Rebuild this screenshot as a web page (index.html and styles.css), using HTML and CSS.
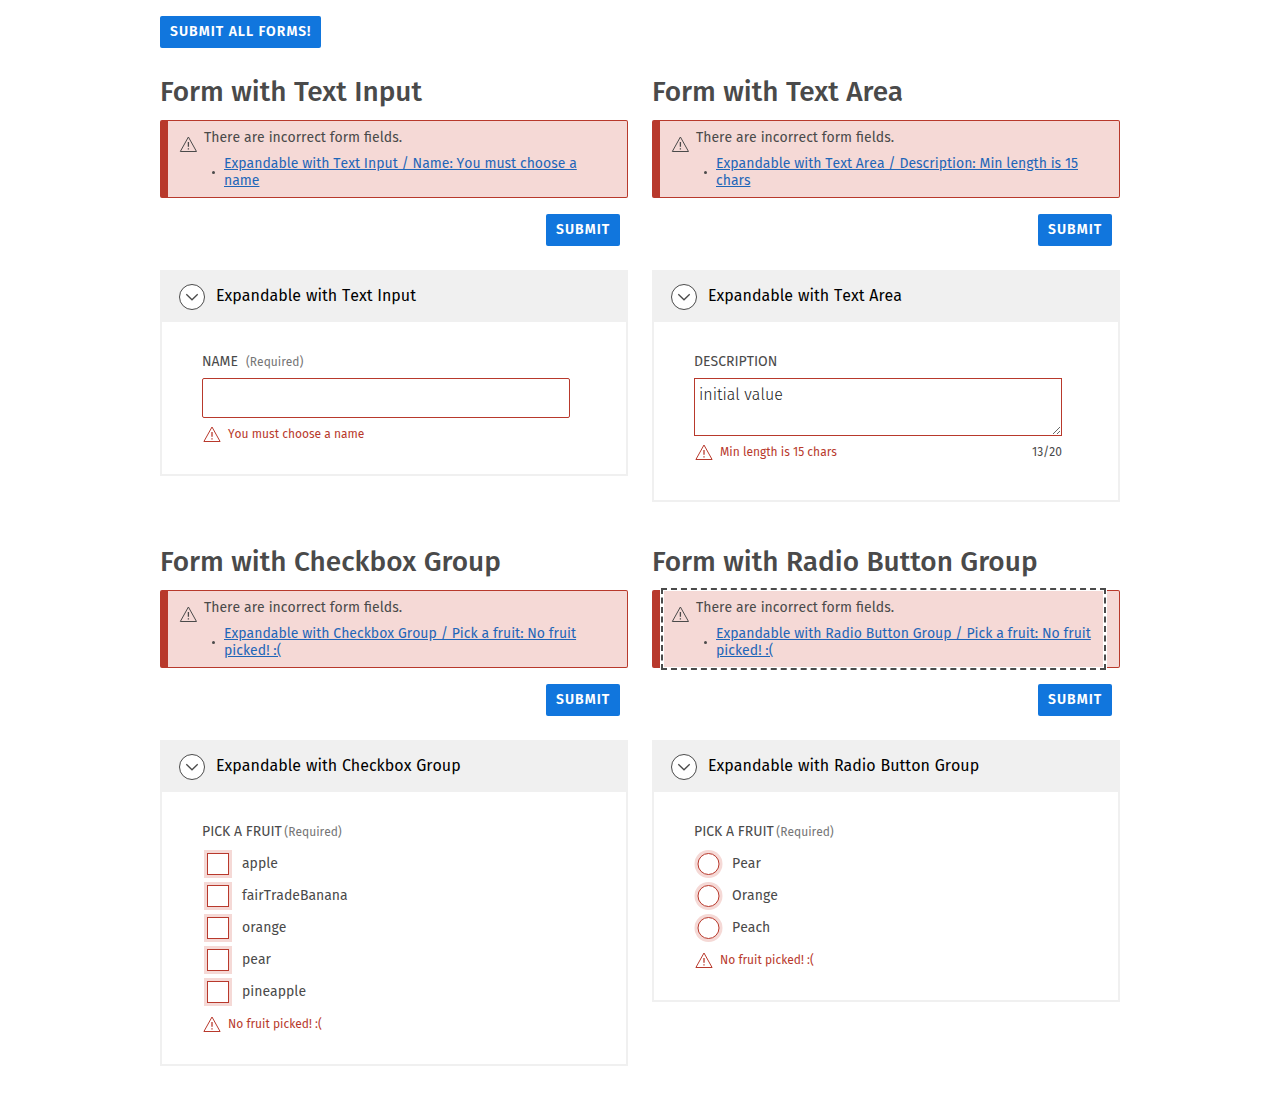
FILE: index.html
```html
<!DOCTYPE html>
<html lang="en">
<head>
<meta charset="utf-8">
<title>Forms</title>
<link rel="stylesheet" href="styles.css">
</head>
<body>
<svg class="defs" aria-hidden="true">
  <symbol id="warning" viewBox="0 0 20 20">
    <path d="M10.4 3 18.5 17.5H2.3Z" fill="none" stroke="currentColor" stroke-linejoin="round"/>
    <path d="M10.4 8V12.8M10.4 14.2V15.6" fill="none" stroke="currentColor" stroke-width="1.3"/>
  </symbol>
  <symbol id="chevron" viewBox="0 0 26 26">
    <circle cx="13" cy="13" r="12.5" fill="#fff" stroke="currentColor"/>
    <path d="M7.3 10.2 13 15.8 18.7 10.2" fill="none" stroke="currentColor" stroke-width="1.3"/>
  </symbol>
</svg>
<main class="page">
  <button class="btn btn-all">SUBMIT ALL FORMS!</button>
  <div class="grid">
    <section class="form">
      <h2>Form with Text Input</h2>
      <div class="alert"><div class="alert-body">
        <svg class="icon"><use href="#warning"/></svg>
        <div class="alert-text"><p>There are incorrect form fields.</p>
          <ul><li><a href="#name">Expandable with Text Input / Name: You must choose a name</a></li></ul></div>
      </div></div>
      <div class="actions"><button class="btn">SUBMIT</button></div>
      <div class="panel">
        <div class="panel-head"><svg class="toggle"><use href="#chevron"/></svg><span>Expandable with Text Input</span></div>
        <div class="panel-body">
          <label class="label" for="name"><span class="caps">NAME</span><small class="spaced">(Required)</small></label>
          <input class="input" id="name" type="text">
          <div class="error"><svg class="icon"><use href="#warning"/></svg><span>You must choose a name</span></div>
        </div>
      </div>
    </section>
    <section class="form">
      <h2>Form with Text Area</h2>
      <div class="alert"><div class="alert-body">
        <svg class="icon"><use href="#warning"/></svg>
        <div class="alert-text"><p>There are incorrect form fields.</p>
          <ul><li><a href="#description">Expandable with Text Area / Description: Min length is 15 chars</a></li></ul></div>
      </div></div>
      <div class="actions"><button class="btn">SUBMIT</button></div>
      <div class="panel">
        <div class="panel-head"><svg class="toggle"><use href="#chevron"/></svg><span>Expandable with Text Area</span></div>
        <div class="panel-body tall">
          <label class="label" for="description"><span class="caps">DESCRIPTION</span></label>
          <textarea class="input area" id="description">initial value</textarea>
          <div class="error"><svg class="icon"><use href="#warning"/></svg><span>Min length is 15 chars</span><span class="count">13/20</span></div>
        </div>
      </div>
    </section>
    <section class="form">
      <h2>Form with Checkbox Group</h2>
      <div class="alert"><div class="alert-body">
        <svg class="icon"><use href="#warning"/></svg>
        <div class="alert-text"><p>There are incorrect form fields.</p>
          <ul><li><a href="#fruits">Expandable with Checkbox Group / Pick a fruit: No fruit picked! :(</a></li></ul></div>
      </div></div>
      <div class="actions"><button class="btn">SUBMIT</button></div>
      <div class="panel">
        <div class="panel-head"><svg class="toggle"><use href="#chevron"/></svg><span>Expandable with Checkbox Group</span></div>
        <div class="panel-body" id="fruits">
          <div class="label"><span class="caps">PICK A FRUIT</span><small>(Required)</small></div>
          <div class="options">
            <label class="option"><input type="checkbox"><span>apple</span></label>
            <label class="option"><input type="checkbox"><span>fairTradeBanana</span></label>
            <label class="option"><input type="checkbox"><span>orange</span></label>
            <label class="option"><input type="checkbox"><span>pear</span></label>
            <label class="option"><input type="checkbox"><span>pineapple</span></label>
          </div>
          <div class="error"><svg class="icon"><use href="#warning"/></svg><span>No fruit picked! :(</span></div>
        </div>
      </div>
    </section>
    <section class="form">
      <h2>Form with Radio Button Group</h2>
      <div class="alert"><div class="alert-body focused">
        <svg class="icon"><use href="#warning"/></svg>
        <div class="alert-text"><p>There are incorrect form fields.</p>
          <ul><li><a href="#fruit">Expandable with Radio Button Group / Pick a fruit: No fruit picked! :(</a></li></ul></div>
      </div></div>
      <div class="actions"><button class="btn">SUBMIT</button></div>
      <div class="panel">
        <div class="panel-head"><svg class="toggle"><use href="#chevron"/></svg><span>Expandable with Radio Button Group</span></div>
        <div class="panel-body" id="fruit">
          <div class="label"><span class="caps">PICK A FRUIT</span><small>(Required)</small></div>
          <div class="options radios">
            <label class="option"><input type="radio" name="fruit"><span>Pear</span></label>
            <label class="option"><input type="radio" name="fruit"><span>Orange</span></label>
            <label class="option"><input type="radio" name="fruit"><span>Peach</span></label>
          </div>
          <div class="error"><svg class="icon"><use href="#warning"/></svg><span>No fruit picked! :(</span></div>
        </div>
      </div>
    </section>
  </div>
</main>
</body>
</html>
```
FILE: styles.css
```css
* { box-sizing: border-box; }
body {
  margin: 0;
  background: #fff;
  color: #4a4a4a;
  font: 14px/17px "Fira Sans", "Noto Sans", sans-serif;
  font-kerning: none;
}
button, input, textarea { font: inherit; font-kerning: none; }
.defs { display: none; }
.page { width: 960px; margin: 0 auto; padding-top: 16px; }
.btn {
  display: block;
  height: 32px;
  padding: 0 9px 2px 10px;
  min-width: 74px;
  border: 0;
  border-radius: 2px;
  background: #1176dd;
  color: #fff;
  font-weight: 600;
  letter-spacing: 1px;
  white-space: nowrap;
  text-align: left;
}
.btn-all { min-width: 161px; font-kerning: normal; }
.grid {
  display: grid;
  grid-template-columns: 468px 468px;
  column-gap: 24px;
  grid-template-rows: 470px auto;
  padding-top: 24px;
}
h2 {
  margin: 0 0 8px;
  font-size: 28px;
  line-height: 40px;
  font-weight: 500;
  white-space: nowrap;
  font-kerning: normal;
  word-spacing: 0.4px;
}
.alert {
  height: 78px;
  border: 1px solid #b8392c;
  border-left-width: 8px;
  border-radius: 2px;
  background: #f5d9d6;
  padding: 0 16px 0 4px;
}
.alert-body { display: flex; height: 76px; padding: 8px 8px 0 6px; }
.focused { outline: 2px dashed #4a4a4a; outline-offset: 1px; box-shadow: 0 0 0 4px #fff; }
.icon { width: 20px; height: 20px; flex: none; }
.alert .icon { margin: 5px 6px 0 0; }
.alert-text p { margin: 0 0 9px; word-spacing: 0.25px; }
ul { margin: 0; padding: 0; list-style: none; }
li { display: flex; align-items: center; gap: 9px; padding-left: 8px; }
li::before { content: ""; width: 3px; height: 3px; border-radius: 50%; background: #4a4a4a; flex: none; }
a { color: #1f66b8; text-decoration: underline; word-spacing: 0.1px; }
.actions { display: flex; justify-content: flex-end; padding: 16px 8px 24px 0; }
.panel { border: 2px solid #f0f0f0; border-top: 0; }
.panel-head {
  display: flex;
  align-items: center;
  gap: 11px;
  height: 52px;
  padding: 2px 0 0 17px;
  background: #f0f0f0;
  color: #000;
  font-size: 16px;
  word-spacing: 0.6px;
}
.panel-head span { padding-bottom: 4px; }
.toggle { width: 26px; height: 26px; color: #4a4a4a; }
.panel-body { width: 408px; padding: 28px 0 30px 40px; }
.tall { padding-bottom: 38px; }
.label { display: flex; align-items: center; height: 22px; margin-bottom: 6px; gap: 2.5px; }
small { font-size: 12px; color: #757575; padding-top: 2px; }
.spaced { margin-left: 5.5px; }
.input { display: block; width: 368px; height: 40px; border: 1px solid #b8392c; border-radius: 2px; background: #fff; padding: 8px; }
.area { height: 58px; border-radius: 0; padding: 6px 4px; font-size: 16px; line-height: 20px; font-weight: 300; color: #1a1a1a; resize: both; }
.error { display: flex; align-items: center; height: 20px; margin-top: 6px; gap: 6px; color: #b8392c; font-size: 12px; }
.error .icon { transform: translateX(-0.4px); }
.error .count { margin-left: auto; color: #4a4a4a; }
.option { display: flex; align-items: center; height: 32px; padding-left: 5px; gap: 13px; }
.radios .option { padding-left: 4px; gap: 12px; }
.option span { padding-bottom: 1px; }
.option input { appearance: none; margin: 0; width: 22px; height: 22px; border: 1px solid #b8392c; background: #fff; box-shadow: 0 0 0 3px #f5d9d6; }
.option input[type="radio"] { border-radius: 50%; transform: translateX(-0.5px); }
```
